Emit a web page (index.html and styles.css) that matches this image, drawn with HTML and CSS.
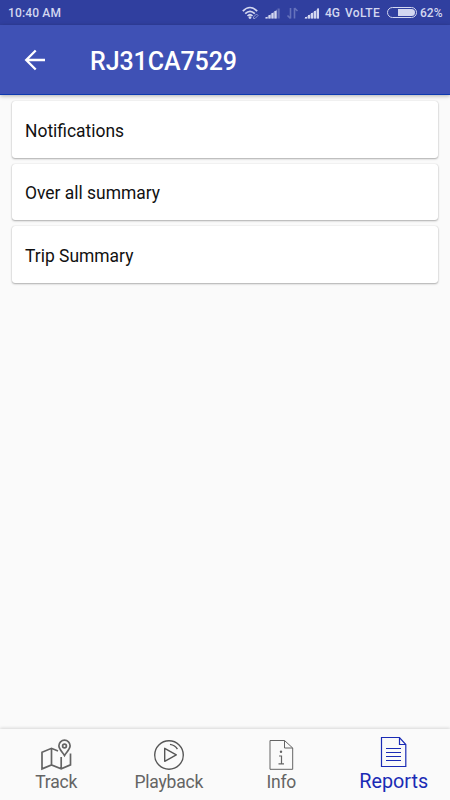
FILE: index.html
```html
<!DOCTYPE html>
<html lang="en">
<head>
<meta charset="utf-8">
<title>Reports</title>
<link rel="stylesheet" href="styles.css">
</head>
<body>
<div class="screen">
  <div class="status">
    <span class="time">10:40 AM</span>
    <svg class="signals" width="80" height="16" viewBox="0 0 80 16">
      <g fill="none" stroke="#d3d7f0" stroke-width="1.7">
        <path d="M.8 6.200Q8-1.200 15.200 6.200M3.200 8.700Q8 3.900 12.800 8.700M5.500 11Q8 8.500 10.500 11"/>
      </g>
      <circle cx="8" cy="12.600" r="1.400" fill="#d3d7f0"/>
      <path d="M11.500 12l3-3 1.500 1.500-3 3h-1.500z" fill="#303f9f" stroke="#aab2e0" stroke-width=".8"/>
      <g fill="#d3d7f0">
        <path d="M23 13.500L35 4.500v9zM62 13.500L77 3v10.500z" opacity=".45"/>
        <path d="M23.500 12h2v1.500h-2zM26.500 10h2v3.500h-2zM29.500 8h2v5.500h-2zM32.500 6h2v7.500h-2z"/>
        <path d="M35.500 3.500h2.200v10h-2.200z" opacity=".3"/>
        <path d="M63 12h2v1.500h-2zM66 10h2v3.500h-2zM69 8h2v5.500h-2zM72 6h2v7.500h-2zM75 3.500h2v10h-2z"/>
      </g>
      <path d="M48.500 3v10.500M48.500 13.500l-3-3M52.500 13.500V3M52.500 3l3 3" fill="none" stroke="#6672bc" stroke-width="1.600"/>
    </svg>
    <span class="network">4G</span>
    <span class="volte">VoLTE</span>
    <span class="battery"><span class="charge"></span></span>
    <span class="percent">62%</span>
  </div>
  <header class="appbar">
    <svg width="22" height="22" viewBox="0 0 22 22" fill="none" stroke="#fff" stroke-width="2.300"><path d="M21 11H2.500M11.700 1.500L2.200 11l9.500 9.500"/></svg>
    <h1>RJ31CA7529</h1>
  </header>
  <main class="list">
    <div class="card"><span>Notifications</span></div>
    <div class="card"><span>Over all summary</span></div>
    <div class="card"><span>Trip Summary</span></div>
  </main>
  <nav class="tabs">
    <div class="tab">
      <svg width="32" height="32" viewBox="40 739 32 32" fill="none" stroke="#646464" stroke-width="1.700">
        <path d="M58 751l-6.500-2.700-9.500 3.900v16.700l9.500-4 9.700 4 9.300-4v-11.500M51.500 748.300v16.600M61.200 757v11.900"/>
        <path d="M64.500 755.500c-2-3.400-5.600-6.300-5.600-9.700a5.600 5.600 0 0 1 11.200 0c0 3.400-3.600 6.300-5.600 9.700z"/>
        <circle cx="64.500" cy="746" r="1.900"/>
      </svg>
      <span class="label">Track</span>
    </div>
    <div class="tab">
      <svg width="32" height="32" viewBox="153 739 32 32" fill="none" stroke="#565656" stroke-width="1.400" stroke-linejoin="round">
        <circle cx="169" cy="755" r="14.300"/>
        <path d="M164.700 748.300v13l11.600-6.500zM170 744.400q5.300.8 7.400 4.800"/>
      </svg>
      <span class="label">Playback</span>
    </div>
    <div class="tab">
      <svg width="32" height="32" viewBox="265 739 32 32" fill="none" stroke="#646464">
        <path d="M270 740.500h14.500l8.200 7.500v21.300H270zM284.500 740.500v7.500h8.200"/>
        <path d="M279 756h2.500v7.500M278.500 763.800h5.500" stroke-width="1.200"/>
        <circle cx="281" cy="751.800" r="1.200" fill="#646464" stroke="none"/>
      </svg>
      <span class="label">Info</span>
    </div>
    <div class="tab active">
      <svg width="32" height="32" viewBox="378 736 32 32" fill="none" stroke="#1a2bb5" stroke-width="1.200">
        <path d="M381.500 737.500h18l6.300 7v22h-24.300zM399.500 737.500v7h6.300"/>
        <path d="M386 748.500h15M386 752.500h15M386 756.500h15M386 760.500h15"/>
      </svg>
      <span class="label">Reports</span>
    </div>
  </nav>
</div>
</body>
</html>
```
FILE: styles.css
```css
* { box-sizing: border-box; }
body { margin: 0; font-family: Roboto, "Liberation Sans", sans-serif; }
.screen { width: 450px; height: 800px; display: flex; flex-direction: column; background: #fafafa; overflow: hidden; }
.status { height: 25px; flex: none; display: flex; align-items: center; padding-left: 8px; background: #303f9f; color: #d3d7f0; font-size: 12px; font-weight: 500; line-height: 25px; white-space: nowrap; }
.time { width: 234px; letter-spacing: .15px; }
.time, .network, .volte, .percent { padding-top: 1px; }
.signals { margin-top: 1px; }
.network { width: 20px; margin-left: 3px; }
.volte { width: 42px; letter-spacing: .35px; }
.battery { width: 30px; height: 11px; border: 1px solid #d3d7f0; border-radius: 6px; padding: 1px; display: flex; justify-content: flex-end; }
.charge { width: 17px; height: 7px; background: #d3d7f0; border-radius: 0 4px 4px 0; }
.percent { margin-left: 3px; }
.appbar { height: 70px; flex: none; display: flex; align-items: center; padding-left: 24px; background: #3f51b5; border-bottom: 1px solid #0d39b0; box-shadow: 0 1px 4px rgba(0,0,0,.3); color: #fff; }
.appbar h1 { margin: 4px 0 0 44px; font-size: 25px; font-weight: 500; line-height: 32px; letter-spacing: -.08px; }
.list { flex: 1; display: flex; flex-direction: column; gap: 6px; padding: 6px 12px; }
.card { height: 56.5px; display: flex; align-items: center; padding: 3px 13px 0; background: #fff; border-radius: 3px; box-shadow: 0 1px 2px rgba(0,0,0,.3), 0 0 1px rgba(0,0,0,.2); color: #111; font-size: 17.450px; line-height: 22px; }
.tabs { height: 71px; flex: none; display: grid; grid-template-columns: repeat(4, 112.5px); box-shadow: 0 -1px 3px rgba(0,0,0,.14); }
.tab { display: flex; flex-direction: column; align-items: center; padding-top: 10px; color: #646464; font-size: 17.500px; letter-spacing: -.2px; }
.tab svg { display: block; }
.label { line-height: 22px; }
.active { padding-top: 7px; color: #1a2bb5; font-size: 19.800px; letter-spacing: 0; }
.active .label { line-height: 28px; }
```
